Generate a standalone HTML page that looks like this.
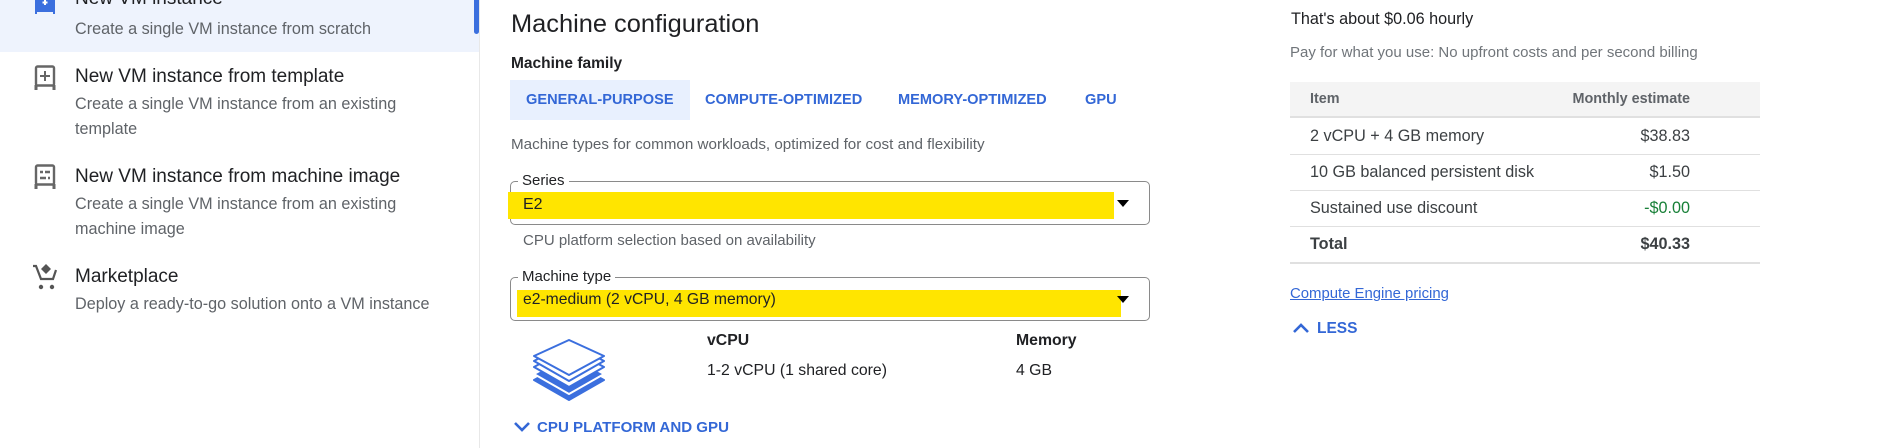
<!DOCTYPE html>
<html><head><meta charset="utf-8"><style>
*{margin:0;padding:0;box-sizing:border-box}
body{width:1891px;height:448px;overflow:hidden;background:#fff;font-family:"Liberation Sans",sans-serif;position:relative}
.a{position:absolute;white-space:nowrap}
.t{font-size:19px;color:#202124}
.s{font-size:16.2px;color:#5f6368}
.tab{font-size:14.6px;font-weight:bold;color:#3367d6}
.box{position:absolute;left:510px;width:640px;height:44px;border:1px solid #8a8a8a;border-radius:5px}
.lbl{position:absolute;background:#fff;padding:0 4px;font-size:15px;color:#202124}
.y{position:absolute;background:#ffe500}
.arr{position:absolute;width:0;height:0;border-left:6px solid transparent;border-right:6px solid transparent;border-top:7px solid #000}
.row{position:absolute;left:1290px;width:470px;border-bottom:1px solid #e0e0e0;font-size:16.2px;color:#3c4043}
</style></head><body>
<!-- sidebar -->
<div class="a" style="left:0;top:0;width:479px;height:52px;background:#eef3fd"></div>
<div class="a" style="left:474px;top:0;width:5px;height:34px;background:#3b6fde;border-radius:0 0 3px 3px"></div>
<div class="a" style="left:479px;top:0;width:1px;height:448px;background:#e8e8e8"></div>
<svg class="a" style="left:34px;top:0" width="22" height="16" viewBox="0 0 22 16"><path d="M1 0h20v14h-2v-2H3v2H1z" fill="#3b6fde"/><path d="M11 0v5M8.5 2.5h5" stroke="#fff" stroke-width="2"/></svg>
<div class="a t" style="left:75px;top:-12px">New VM instance</div>
<div class="a s" style="left:75px;top:20px">Create a single VM instance from scratch</div>
<svg class="a" style="left:34px;top:65px" width="22" height="26" viewBox="0 0 22 26"><rect x="2" y="1.5" width="18" height="19" rx="1.5" fill="none" stroke="#666" stroke-width="2.4"/><path d="M2 20v5M20 20v5" stroke="#666" stroke-width="3"/><path d="M11 6v10M6 11h10" stroke="#666" stroke-width="2"/></svg>
<div class="a t" style="left:75px;top:66px">New VM instance from template</div>
<div class="a s" style="left:75px;top:95px">Create a single VM instance from an existing</div>
<div class="a s" style="left:75px;top:120px">template</div>
<svg class="a" style="left:34px;top:164px" width="22" height="26" viewBox="0 0 22 26"><rect x="2" y="1.5" width="18" height="19" rx="1.5" fill="none" stroke="#666" stroke-width="2.4"/><path d="M2 20v5M20 20v5" stroke="#666" stroke-width="3"/><path d="M6 8h3M11 8h5M6 14h6M14 14h2" stroke="#666" stroke-width="2.4"/></svg>
<div class="a t" style="left:75px;top:166px">New VM instance from machine image</div>
<div class="a s" style="left:75px;top:195px">Create a single VM instance from an existing</div>
<div class="a s" style="left:75px;top:220px">machine image</div>
<svg class="a" style="left:32px;top:263px" width="27" height="28" viewBox="0 0 27 28"><path d="M1 3h3l5 13h12l3-9" fill="none" stroke="#555" stroke-width="2.2"/><path d="M14 1l5 5-5 5-5-5z" fill="#555"/><circle cx="9" cy="24" r="2.2" fill="#555"/><circle cx="20" cy="24" r="2.2" fill="#555"/></svg>
<div class="a t" style="left:75px;top:266px">Marketplace</div>
<div class="a s" style="left:75px;top:295px">Deploy a ready-to-go solution onto a VM instance</div>
<!-- middle -->
<div class="a" style="left:511px;top:10px;font-size:25.4px;color:#202124">Machine configuration</div>
<div class="a" style="left:511px;top:55px;font-size:15.5px;font-weight:bold;color:#202124">Machine family</div>
<div class="a" style="left:510px;top:80px;width:180px;height:40px;background:#e8f0fe"></div>
<div class="a tab" style="left:526px;top:92px">GENERAL-PURPOSE</div>
<div class="a tab" style="left:705px;top:92px">COMPUTE-OPTIMIZED</div>
<div class="a tab" style="left:898px;top:92px">MEMORY-OPTIMIZED</div>
<div class="a tab" style="left:1085px;top:92px">GPU</div>
<div class="a" style="left:511px;top:136px;font-size:15.2px;color:#5f6368">Machine types for common workloads, optimized for cost and flexibility</div>
<div class="box" style="top:181px"></div>
<div class="lbl" style="left:518px;top:172px">Series</div>
<div class="y" style="left:508px;top:192px;width:606px;height:27px"></div>
<div class="a" style="left:523px;top:196px;font-size:16px;color:#202124">E2</div>
<div class="arr" style="left:1117px;top:200px"></div>
<div class="a" style="left:523px;top:232px;font-size:15px;color:#5f6368">CPU platform selection based on availability</div>
<div class="box" style="top:277px"></div>
<div class="lbl" style="left:518px;top:268px">Machine type</div>
<div class="y" style="left:517px;top:290px;width:604px;height:27px"></div>
<div class="a" style="left:523px;top:291px;font-size:15.7px;color:#202124">e2-medium (2 vCPU, 4 GB memory)</div>
<div class="arr" style="left:1117px;top:296px"></div>
<svg class="a" style="left:532px;top:339px" width="74" height="64" viewBox="0 0 74 64"><path d="M2 41l35 20 35-20-35-19z" fill="#3b6fde" stroke="#3b6fde" stroke-width="2" stroke-linejoin="round"/><path d="M2 35l35 20 35-20-35-19z" fill="#3b6fde" stroke="#fff" stroke-width="2" stroke-linejoin="round"/><path d="M2 28l35 20 35-20-35-19z" fill="#fff" stroke="#3b6fde" stroke-width="2" stroke-linejoin="round"/><path d="M2 22l35 20 35-20-35-19z" fill="#fff" stroke="#3b6fde" stroke-width="2" stroke-linejoin="round"/><path d="M2 17l35 19 35-19L37 1z" fill="#fff" stroke="#3b6fde" stroke-width="2" stroke-linejoin="round"/></svg>
<div class="a" style="left:707px;top:332px;font-size:15.8px;font-weight:bold;color:#202124">vCPU</div>
<div class="a" style="left:707px;top:362px;font-size:15.8px;color:#202124">1-2 vCPU (1 shared core)</div>
<div class="a" style="left:1016px;top:332px;font-size:15.8px;font-weight:bold;color:#202124">Memory</div>
<div class="a" style="left:1016px;top:362px;font-size:15.8px;color:#202124">4 GB</div>
<svg class="a" style="left:513px;top:421px" width="18" height="12" viewBox="0 0 18 12"><path d="M2 2l7 7 7-7" fill="none" stroke="#3367d6" stroke-width="2.6"/></svg>
<div class="a tab" style="left:537px;top:419px;font-size:15.1px">CPU PLATFORM AND GPU</div>
<!-- right -->
<div class="a" style="left:1291px;top:-16px;font-size:16px;color:#202124">$</div>
<div class="a" style="left:1291px;top:10px;font-size:16.2px;color:#202124">That's about $0.06 hourly</div>
<div class="a" style="left:1290px;top:44px;font-size:15px;color:#70757a">Pay for what you use: No upfront costs and per second billing</div>
<div class="a" style="left:1290px;top:82px;width:470px;height:36px;background:#f4f4f4;border-bottom:2px solid #e0e0e0"></div>
<div class="a" style="left:1310px;top:91px;font-size:14.4px;font-weight:bold;color:#5f6368">Item</div>
<div class="a" style="left:1480px;width:210px;text-align:right;top:91px;font-size:14.4px;font-weight:bold;color:#5f6368">Monthly estimate</div>
<div class="row" style="top:118px;height:37px"><span class="a" style="left:20px;top:9px">2 vCPU + 4 GB memory</span><span class="a" style="right:70px;top:9px">$38.83</span></div>
<div class="row" style="top:155px;height:36px"><span class="a" style="left:20px;top:8px">10 GB balanced persistent disk</span><span class="a" style="right:70px;top:8px">$1.50</span></div>
<div class="row" style="top:191px;height:36px"><span class="a" style="left:20px;top:8px">Sustained use discount</span><span class="a" style="right:70px;top:8px;color:#188038">-$0.00</span></div>
<div class="row" style="top:227px;height:37px;border-bottom:2px solid #e0e0e0"><span class="a" style="left:20px;top:8px;font-weight:bold">Total</span><span class="a" style="right:70px;top:8px;font-weight:bold">$40.33</span></div>
<div class="a" style="left:1290px;top:286px;font-size:14.9px;color:#3367d6;text-decoration:underline">Compute Engine pricing</div>
<svg class="a" style="left:1292px;top:322px" width="18" height="12" viewBox="0 0 18 12"><path d="M2 10l7-7 7 7" fill="none" stroke="#3367d6" stroke-width="2.6"/></svg>
<div class="a tab" style="left:1317px;top:320px;font-size:15.5px">LESS</div>
</body></html>
